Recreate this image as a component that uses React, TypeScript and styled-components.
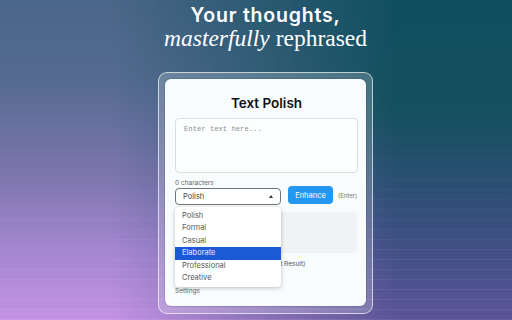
import React from "react";
import styled, { createGlobalStyle } from "styled-components";

const Global = createGlobalStyle`
  html, body { margin: 0; padding: 0; }
  body { width: 512px; height: 320px; overflow: hidden; font-family: Inter, "Liberation Sans", sans-serif; }
  * { box-sizing: border-box; }
`;

const Page = styled.div`
  position: relative;
  width: 512px;
  height: 320px;
  overflow: hidden;
  background: linear-gradient(to bottom, #0f4f5f 0%, #14505f 35%, #3a4f80 72%, #5b5497 100%);
  &::before {
    content: "";
    position: absolute;
    inset: 0;
    background: linear-gradient(to bottom, #4a6688 0%, #556b90 25%, #7d76ae 55%, #a486cf 78%, #c392e4 100%);
    -webkit-mask-image: linear-gradient(to right, #000 0%, #000 22%, transparent 78%);
    mask-image: linear-gradient(to right, #000 0%, #000 22%, transparent 78%);
  }
  &::after {
    content: "";
    position: absolute;
    inset: 0;
    background: repeating-linear-gradient(to bottom, transparent 0px, transparent 9px, rgba(255,255,255,0.08) 9px, rgba(255,255,255,0.08) 10px);
    -webkit-mask-image: linear-gradient(to bottom, transparent 35%, #000 100%);
    mask-image: linear-gradient(to bottom, transparent 35%, #000 100%);
  }
`;

const Content = styled.div`
  position: relative;
  z-index: 1;
  display: flex;
  flex-direction: column;
  align-items: center;
  padding-left: 19px;
`;

const Headline = styled.h1`
  margin: 4px 0 0;
  font-family: Inter, "Liberation Sans", sans-serif;
  font-weight: 600;
  font-size: 19.5px;
  line-height: 22px;
  color: #ffffff;
  letter-spacing: 0.8px;
`;

const Subline = styled.div`
  font-family: "Liberation Serif", "DejaVu Serif", serif;
  font-size: 23.5px;
  line-height: 24px;
  color: #ffffff;
  em { font-style: italic; }
`;

const Frame = styled.div`
  margin-top: 22px;
  width: 215px;
  height: 242px;
  padding: 6px;
  border-radius: 9px;
  border: 1px solid rgba(255, 255, 255, 0.65);
  background: rgba(255, 255, 255, 0.2);
`;

const Card = styled.div`
  position: relative;
  height: 227px;
  border-radius: 6px;
  background: #f8fcfd;
  box-shadow: 0 0 0 1px rgba(30, 40, 90, 0.15);
  padding: 15px 8px 0 10px;
  display: flex;
  flex-direction: column;
`;

const Title = styled.h2`
  margin: 0;
  text-align: center;
  font-family: Inter, "Liberation Sans", sans-serif;
  font-weight: 600;
  font-size: 13.5px;
  line-height: 18px;
  color: #111;
`;

const TextArea = styled.textarea`
  margin-top: 6px;
  height: 55px;
  width: 100%;
  resize: none;
  border: 1px solid #d9dee2;
  border-radius: 4px;
  background: #fdfefe;
  padding: 6px 8px;
  font-family: "Liberation Mono", "DejaVu Sans Mono", monospace;
  font-size: 7.2px;
  line-height: 9px;
  outline: none;
  &::placeholder { color: #8a8f94; }
`;

const Count = styled.div`
  margin-top: 6px;
  font-size: 6.5px;
  line-height: 8px;
  color: #666;
`;

const Controls = styled.div`
  margin-top: -1px;
  display: flex;
  align-items: flex-start;
  height: 19px;
`;

const SelectWrap = styled.div`
  position: relative;
  margin-top: 2px;
  width: 106px;
`;

const SelectBox = styled.div`
  height: 17px;
  border: 1px solid #6f7378;
  border-radius: 4px;
  background: #fff;
  display: flex;
  align-items: center;
  justify-content: space-between;
  padding: 0 7px 0 7px;
  font-size: 7.5px;
  color: #444;
`;

const Arrow = styled.span`
  width: 0;
  height: 0;
  border-left: 2.5px solid transparent;
  border-right: 2.5px solid transparent;
  border-bottom: 3px solid #333;
`;

const Menu = styled.ul`
  position: absolute;
  z-index: 5;
  left: 0;
  top: 19px;
  width: 106px;
  margin: 0;
  padding: 2.5px 0;
  list-style: none;
  background: #fff;
  border-radius: 4px;
  box-shadow: 0 1px 4px rgba(0, 0, 0, 0.25);
`;

const Item = styled.li<{ $active?: boolean }>`
  height: 12.5px;
  line-height: 12.5px;
  padding-left: 7px;
  font-size: 7.5px;
  color: ${(p) => (p.$active ? "#e6eeff" : "#555")};
  background: ${(p) => (p.$active ? "#1a5ad4" : "transparent")};
`;

const EnhanceButton = styled.button`
  margin-left: 7px;
  width: 45px;
  height: 18px;
  border: none;
  border-radius: 4px;
  background: #2498f0;
  color: #fff;
  font-family: Inter, "Liberation Sans", sans-serif;
  font-size: 7.5px;
  padding: 0;
`;

const Hint = styled.span`
  margin-left: 5px;
  margin-top: 5.5px;
  font-size: 6px;
  line-height: 7px;
  color: #777;
`;

const ResultBox = styled.div`
  margin-top: 7px;
  height: 41px;
  margin-right: 1px;
  border-radius: 4px;
  background: #f0f3f4;
`;

const OptionRow = styled.div`
  margin-top: 6px;
  padding-left: 92px;
  font-size: 6.5px;
  line-height: 10px;
  color: #555;
`;

const SettingsLink = styled.div`
  margin-top: 17px;
  font-size: 6.5px;
  line-height: 10px;
  color: #666;
`;

const modes = ["Polish", "Formal", "Casual", "Elaborate", "Professional", "Creative"];

export default function App() {
  return (
    <Page>
      <Global />
      <Content>
        <Headline>Your thoughts,</Headline>
        <Subline>
          <em>masterfully</em> rephrased
        </Subline>
        <Frame>
          <Card>
            <Title>Text Polish</Title>
            <TextArea placeholder="Enter text here..." readOnly />
            <Count>0 characters</Count>
            <Controls>
              <SelectWrap>
                <SelectBox>
                  Polish
                  <Arrow />
                </SelectBox>
                <Menu>
                  {modes.map((m) => (
                    <Item key={m} $active={m === "Elaborate"}>
                      {m}
                    </Item>
                  ))}
                </Menu>
              </SelectWrap>
              <EnhanceButton>Enhance</EnhanceButton>
              <Hint>(Enter)</Hint>
            </Controls>
            <ResultBox />
            <OptionRow>(Last Result)</OptionRow>
            <SettingsLink>Settings</SettingsLink>
          </Card>
        </Frame>
      </Content>
    </Page>
  );
}
